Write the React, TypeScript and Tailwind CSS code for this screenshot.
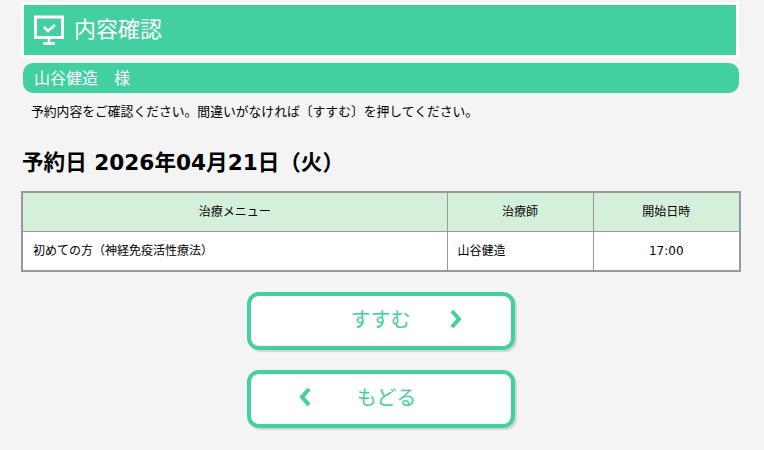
export default function App() {
  return (
    <div className="min-h-[450px] bg-[#f4f4f4] text-black font-['DejaVu_Sans','Noto_Sans_CJK_JP',sans-serif] overflow-hidden">
      <div className="pl-[21px] pr-[25px] pt-[2px]">
        <div className="border-[3px] border-white bg-[#43d0a0] h-[56px] flex items-center pl-[10px] text-white">
          <svg width="30" height="30" viewBox="0 0 30 30" fill="none" stroke="#fff" strokeWidth="3" className="shrink-0">
            <path d="M1.5 22.5V2H28.5V22.5Z" />
            <path d="M10 12l4 4 7-6" strokeWidth="2.5" />
            <path d="M15 23V28M9 28.5H21" strokeWidth="2.5" />
          </svg>
          <span className="ml-[10px] pb-[7px] text-[22px] leading-none font-['Noto_Sans_CJK_JP',sans-serif]">内容確認</span>
        </div>
      </div>
      <div className="pl-[23px] pr-[25px] mt-[5px]">
        <div className="h-[30px] rounded-[10px] bg-[#43d0a0] text-white text-[16px] flex items-center pl-[11px] pb-[3px] font-['Noto_Sans_CJK_JP',sans-serif]">
          山谷健造　様
        </div>
      </div>
      <p className="ml-[31px] mt-[9px] text-[12.8px] leading-[18px] font-['Noto_Sans_CJK_JP',sans-serif]">
        予約内容をご確認ください。間違いがなければ〔すすむ〕を押してください。
      </p>
      <h2 className="ml-[22px] mt-[28px] text-[21.6px] leading-[30px] font-bold">予約日 2026年04月21日（火）</h2>
      <div className="pl-[21px] pr-[23px] mt-[13px]">
        <table className="w-[718px] table-fixed border-collapse border-2 border-[#999] text-[12px]">
          <colgroup>
            <col className="w-[425px]" />
            <col className="w-[146px]" />
            <col className="w-[147px]" />
          </colgroup>
          <thead>
            <tr className="h-[39px] bg-[#d5f0da]">
              <th className="border border-[#999] font-normal">治療メニュー</th>
              <th className="border border-[#999] font-normal">治療師</th>
              <th className="border border-[#999] font-normal">開始日時</th>
            </tr>
          </thead>
          <tbody>
            <tr className="h-[40px] bg-white">
              <td className="border border-[#999] pl-[10px] pt-[1px]">初めての方（神経免疫活性療法）</td>
              <td className="border border-[#999] pl-[10px] pt-[1px]">山谷健造</td>
              <td className="border border-[#999] text-center pt-[1px]">17:00</td>
            </tr>
          </tbody>
        </table>
      </div>
      <div className="mt-[20px] flex flex-col items-center gap-[20px]">
        <button className="relative ml-[-3px] w-[268px] h-[58px] rounded-[12px] border-[4px] border-[#43d0a0] bg-white shadow-[2px_2px_1px_#d4d4d4] text-[#43d0a0] text-[20px] flex items-center justify-center pb-[4px] font-['Noto_Sans_CJK_JP',sans-serif]">
          <span>すすむ</span>
          <svg width="14" height="20" viewBox="0 0 14 20" fill="none" stroke="#43d0a0" strokeWidth="4" className="absolute left-[198px] top-[13px]">
            <path d="M3 2l7 8-7 8" />
          </svg>
        </button>
        <button className="relative ml-[-3px] w-[268px] h-[58px] rounded-[12px] border-[4px] border-[#43d0a0] bg-white shadow-[2px_2px_1px_#d4d4d4] text-[#43d0a0] text-[20px] flex items-center justify-center pb-[4px] font-['Noto_Sans_CJK_JP',sans-serif]">
          <span className="ml-[12px]">もどる</span>
          <svg width="14" height="20" viewBox="0 0 14 20" fill="none" stroke="#43d0a0" strokeWidth="4" className="absolute left-[47px] top-[13px]">
            <path d="M11 2L4 10l7 8" />
          </svg>
        </button>
      </div>
    </div>
  );
}
